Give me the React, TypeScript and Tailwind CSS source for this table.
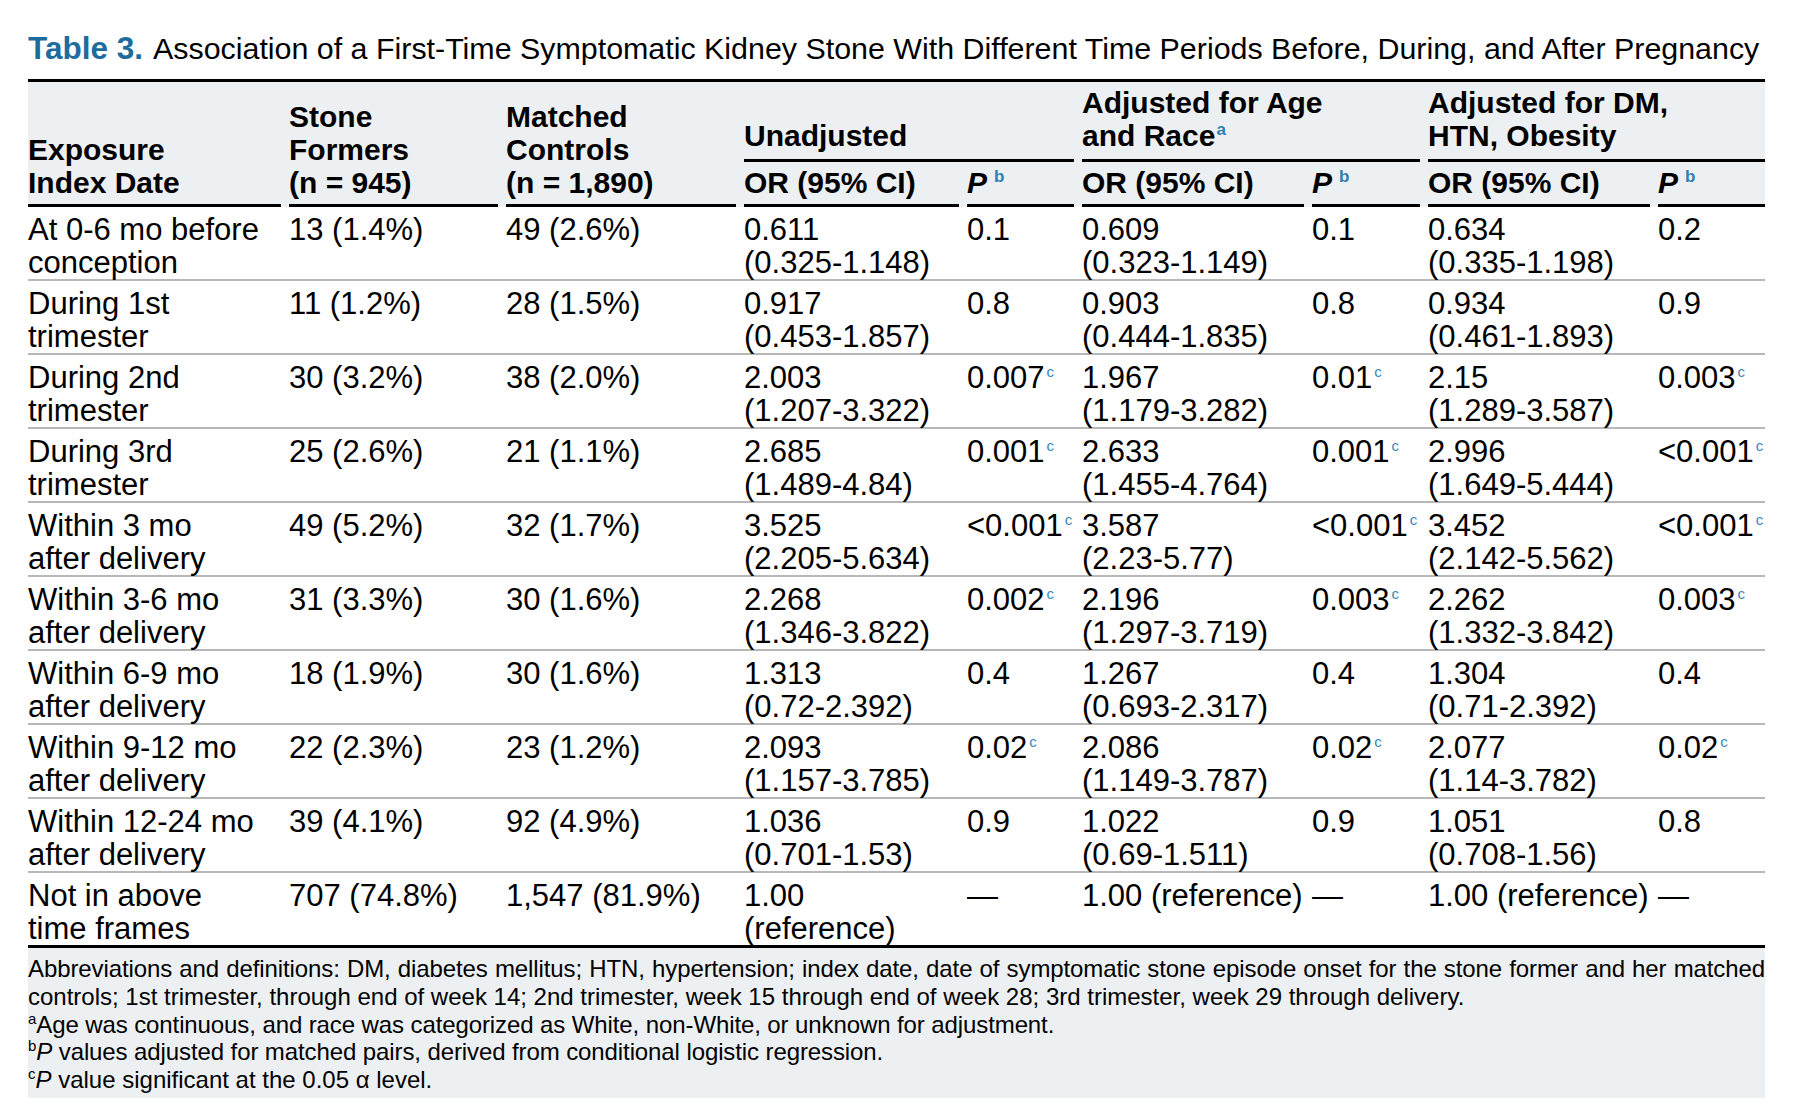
import React from "react";

type P = { v: string; sig?: boolean };
type Row = {
  label: [string, string];
  sf: string;
  mc: string;
  or1: string[];
  p1: P;
  or2: string[];
  p2: P;
  or3: string[];
  p3: P;
};

const rows: Row[] = [
  { label: ["At 0-6 mo before", "conception"], sf: "13 (1.4%)", mc: "49 (2.6%)", or1: ["0.611", "(0.325-1.148)"], p1: { v: "0.1" }, or2: ["0.609", "(0.323-1.149)"], p2: { v: "0.1" }, or3: ["0.634", "(0.335-1.198)"], p3: { v: "0.2" } },
  { label: ["During 1st", "trimester"], sf: "11 (1.2%)", mc: "28 (1.5%)", or1: ["0.917", "(0.453-1.857)"], p1: { v: "0.8" }, or2: ["0.903", "(0.444-1.835)"], p2: { v: "0.8" }, or3: ["0.934", "(0.461-1.893)"], p3: { v: "0.9" } },
  { label: ["During 2nd", "trimester"], sf: "30 (3.2%)", mc: "38 (2.0%)", or1: ["2.003", "(1.207-3.322)"], p1: { v: "0.007", sig: true }, or2: ["1.967", "(1.179-3.282)"], p2: { v: "0.01", sig: true }, or3: ["2.15", "(1.289-3.587)"], p3: { v: "0.003", sig: true } },
  { label: ["During 3rd", "trimester"], sf: "25 (2.6%)", mc: "21 (1.1%)", or1: ["2.685", "(1.489-4.84)"], p1: { v: "0.001", sig: true }, or2: ["2.633", "(1.455-4.764)"], p2: { v: "0.001", sig: true }, or3: ["2.996", "(1.649-5.444)"], p3: { v: "<0.001", sig: true } },
  { label: ["Within 3 mo", "after delivery"], sf: "49 (5.2%)", mc: "32 (1.7%)", or1: ["3.525", "(2.205-5.634)"], p1: { v: "<0.001", sig: true }, or2: ["3.587", "(2.23-5.77)"], p2: { v: "<0.001", sig: true }, or3: ["3.452", "(2.142-5.562)"], p3: { v: "<0.001", sig: true } },
  { label: ["Within 3-6 mo", "after delivery"], sf: "31 (3.3%)", mc: "30 (1.6%)", or1: ["2.268", "(1.346-3.822)"], p1: { v: "0.002", sig: true }, or2: ["2.196", "(1.297-3.719)"], p2: { v: "0.003", sig: true }, or3: ["2.262", "(1.332-3.842)"], p3: { v: "0.003", sig: true } },
  { label: ["Within 6-9 mo", "after delivery"], sf: "18 (1.9%)", mc: "30 (1.6%)", or1: ["1.313", "(0.72-2.392)"], p1: { v: "0.4" }, or2: ["1.267", "(0.693-2.317)"], p2: { v: "0.4" }, or3: ["1.304", "(0.71-2.392)"], p3: { v: "0.4" } },
  { label: ["Within 9-12 mo", "after delivery"], sf: "22 (2.3%)", mc: "23 (1.2%)", or1: ["2.093", "(1.157-3.785)"], p1: { v: "0.02", sig: true }, or2: ["2.086", "(1.149-3.787)"], p2: { v: "0.02", sig: true }, or3: ["2.077", "(1.14-3.782)"], p3: { v: "0.02", sig: true } },
  { label: ["Within 12-24 mo", "after delivery"], sf: "39 (4.1%)", mc: "92 (4.9%)", or1: ["1.036", "(0.701-1.53)"], p1: { v: "0.9" }, or2: ["1.022", "(0.69-1.511)"], p2: { v: "0.9" }, or3: ["1.051", "(0.708-1.56)"], p3: { v: "0.8" } },
  { label: ["Not in above", "time frames"], sf: "707 (74.8%)", mc: "1,547 (81.9%)", or1: ["1.00", "(reference)"], p1: { v: "\u2014" }, or2: ["1.00 (reference)"], p2: { v: "\u2014" }, or3: ["1.00 (reference)"], p3: { v: "\u2014" } },
];

const GRID =
  "grid grid-cols-[253px_209px_230px_215px_107px_222px_108px_222px_107px] gap-x-2";

function Lines({ lines }: { lines: string[] }) {
  return (
    <div className="whitespace-nowrap">
      {lines.map((l, i) => (
        <div key={i}>{l}</div>
      ))}
    </div>
  );
}

function PVal({ p }: { p: P }) {
  return (
    <div className="whitespace-nowrap">
      {p.v}
      {p.sig && (
        <span className="ml-[2px] align-super text-[15px] leading-[0] text-[#3b87ba]">c</span>
      )}
    </div>
  );
}

function PHead() {
  return (
    <span className="whitespace-nowrap">
      <span className="italic">P</span>
      <span className="ml-[7px] align-super text-[17px] leading-[0] text-[#2f7fb2]">b</span>
    </span>
  );
}

export default function App() {
  const groupCell = "col-span-2 self-end pt-[4px] pb-[7px] border-b-[3px] border-black";
  const subCell = "self-end pt-[4px] pb-[5px] border-b-[3px] border-black";
  const leftCell = "row-span-2 self-end pb-[5px] border-b-[3px] border-black";
  return (
    <div className="w-[1794px] h-[1114px] bg-white text-black font-['Liberation_Sans',Arial,sans-serif]">
      <div className="pl-[28px] pt-[30px] text-[30.4px] leading-[36px] whitespace-nowrap">
        <span className="font-bold text-[31.5px] text-[#1d6c9d]">Table 3.</span>
        <span className="ml-[10px]">
          Association of a First-Time Symptomatic Kidney Stone With Different Time Periods Before, During, and After Pregnancy
        </span>
      </div>

      <div className="ml-[28px] mt-[13px] w-[1737px]">
        <div className={GRID + " border-t-[3px] border-black bg-[#edf0f3] text-[30px] leading-[33px] font-bold"}>
          <div className={leftCell}>
            Exposure
            <br />
            Index Date
          </div>
          <div className={leftCell}>
            Stone
            <br />
            Formers
            <br />
            (n = 945)
          </div>
          <div className={leftCell}>
            Matched
            <br />
            Controls
            <br />
            (n = 1,890)
          </div>
          <div className={groupCell}>Unadjusted</div>
          <div className={groupCell}>
            Adjusted for Age
            <br />
            and Race
            <span className="ml-[1px] align-super text-[17px] leading-[0] text-[#2f7fb2]">a</span>
          </div>
          <div className={groupCell}>
            Adjusted for DM,
            <br />
            HTN, Obesity
          </div>
          <div className={subCell + " whitespace-nowrap"}>OR (95% CI)</div>
          <div className={subCell}>
            <PHead />
          </div>
          <div className={subCell + " whitespace-nowrap"}>OR (95% CI)</div>
          <div className={subCell}>
            <PHead />
          </div>
          <div className={subCell + " whitespace-nowrap"}>OR (95% CI)</div>
          <div className={subCell}>
            <PHead />
          </div>
        </div>

        <div className="border-b-[3px] border-black text-[31px] leading-[33px]">
          {rows.map((r, i) => (
            <div
              key={i}
              className={
                i === rows.length - 1
                  ? GRID + " pt-[6px] h-[72px]"
                  : GRID + " pt-[6px] h-[74px] border-b-2 border-[#b8b8b8]"
              }
            >
              <Lines lines={r.label} />
              <div className="whitespace-nowrap">{r.sf}</div>
              <div className="whitespace-nowrap">{r.mc}</div>
              <Lines lines={r.or1} />
              <PVal p={r.p1} />
              <Lines lines={r.or2} />
              <PVal p={r.p2} />
              <Lines lines={r.or3} />
              <PVal p={r.p3} />
            </div>
          ))}
        </div>

        <div className="bg-[#edf0f3] pt-[7px] pb-[4px] text-[24px] leading-[27.8px]">
          <div className="whitespace-nowrap text-justify tracking-[-0.1px] [text-align-last:justify]">
            Abbreviations and definitions: DM, diabetes mellitus; HTN, hypertension; index date, date of symptomatic stone episode onset for the stone former and her matched
          </div>
          <div className="whitespace-nowrap">
            controls; 1st trimester, through end of week 14; 2nd trimester, week 15 through end of week 28; 3rd trimester, week 29 through delivery.
          </div>
          <div className="whitespace-nowrap tracking-[-0.1px]">
            <span className="align-super text-[15px] leading-[0]">a</span>
            Age was continuous, and race was categorized as White, non-White, or unknown for adjustment.
          </div>
          <div className="whitespace-nowrap tracking-[-0.1px]">
            <span className="align-super text-[15px] leading-[0]">b</span>
            <span className="italic">P</span> values adjusted for matched pairs, derived from conditional logistic regression.
          </div>
          <div className="whitespace-nowrap">
            <span className="align-super text-[15px] leading-[0]">c</span>
            <span className="italic">P</span> value significant at the 0.05 α level.
          </div>
        </div>
      </div>
    </div>
  );
}
